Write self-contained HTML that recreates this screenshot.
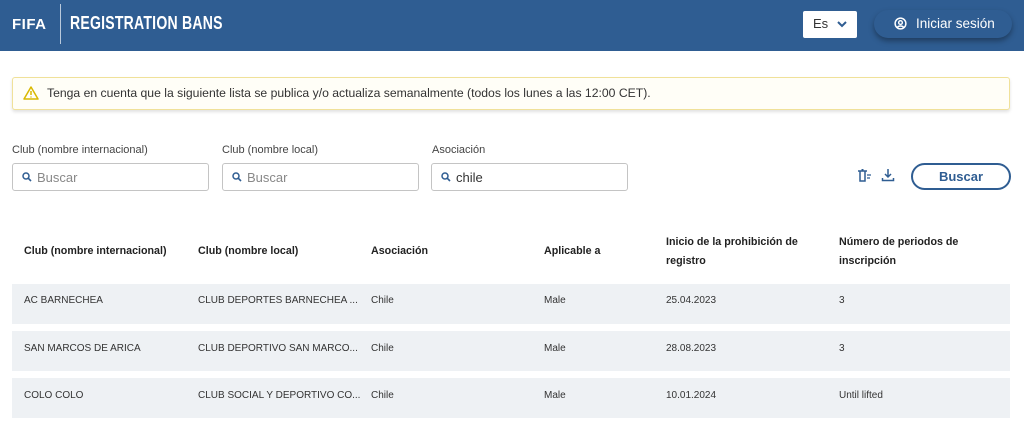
<!DOCTYPE html>
<html><head><meta charset="utf-8"><style>
*{box-sizing:border-box;margin:0;padding:0}
body{width:1024px;height:445px;background:#fff;font-family:"Liberation Sans",sans-serif;color:#333;position:relative;overflow:hidden}
.hdr{position:absolute;left:0;top:0;width:1024px;height:51px;background:#2f5d92}
.abs{position:absolute}
.fifa{left:12px;top:16px;color:#fff;font-weight:900;font-size:15px;letter-spacing:0.5px}
.sep{left:60px;top:4px;width:1px;height:40px;background:#b9c9dc}
.title{left:70px;top:13px;color:#fff;font-weight:bold;font-size:18px;transform:scaleX(0.78);transform-origin:left;letter-spacing:0.3px}
.lang{left:803px;top:11px;width:54px;height:27px;background:#fff;border-radius:2px;font-size:13px;color:#333;padding:5px 10px}
.login{left:874px;top:10px;width:138px;height:28px;border-radius:14px;background:#2f5d92;box-shadow:0 3px 6px rgba(0,0,0,.35);color:#fff;font-size:13.5px;padding:6px 0 0 42px}
.note{left:12px;top:77px;width:998px;height:33px;border:1px solid #f0e199;background:#fffef7;border-radius:3px;box-shadow:0 2px 3px rgba(0,0,0,.12);font-size:12.2px;color:#333;padding:8px 0 0 34px}
.lbl{font-size:11px;color:#444;top:144px}
.inp{top:163px;width:197px;height:28px;border:1px solid #c4c4c4;border-radius:3px;font-size:13px;color:#888;padding:6px 0 0 24px}
.inp svg{position:absolute;left:9px;top:8px}
.btn{left:911px;top:163px;width:100px;height:27px;border:2px solid #2f5d92;border-radius:14px;color:#2f5d92;font-weight:bold;font-size:13px;text-align:center;padding-top:4px}
.th{font-size:10.7px;font-weight:bold;color:#222;line-height:19px}
.row{left:12px;width:998px;height:40px;background:#eef1f4}
.td{font-size:10px;color:#333}
</style></head><body>
<div class="hdr"></div>
<div class="abs fifa">FIFA</div>
<div class="abs sep"></div>
<div class="abs title">REGISTRATION BANS</div>
<div class="abs lang">Es <svg style="position:absolute;left:34px;top:10px" width="10" height="7" viewBox="0 0 10 7"><path d="M1 1l4 4 4-4" stroke="#2f5d92" stroke-width="2" fill="none"/></svg></div>
<div class="abs login"><svg style="position:absolute;left:20px;top:7px" width="13" height="13" viewBox="0 0 14 14"><circle cx="7" cy="7" r="5.8" stroke="#fff" stroke-width="1.6" fill="none"/><circle cx="7" cy="6" r="2" stroke="#fff" stroke-width="1.5" fill="none"/><path d="M3.5 11.2c1.5-2 5.5-2 7 0" stroke="#fff" stroke-width="1.5" fill="none"/></svg>Iniciar sesión</div>
<div class="abs note"><svg style="position:absolute;left:10px;top:8px" width="16" height="14" viewBox="0 0 16 14"><path d="M8 1L15 13H1Z" stroke="#d9b800" stroke-width="1.5" fill="none" stroke-linejoin="round"/><path d="M8 5v4M8 10.5v1" stroke="#d9b800" stroke-width="1.5"/></svg>Tenga en cuenta que la siguiente lista se publica y/o actualiza semanalmente (todos los lunes a las 12:00 CET).</div>
<div class="abs lbl" style="left:12px">Club (nombre internacional)</div>
<div class="abs lbl" style="left:222px">Club (nombre local)</div>
<div class="abs lbl" style="left:432px">Asociación</div>
<div class="abs inp" style="left:12px"><svg width="10" height="10" viewBox="0 0 10 10"><circle cx="4" cy="4" r="3" stroke="#2f5d92" stroke-width="1.5" fill="none"/><path d="M6.2 6.2L9 9" stroke="#2f5d92" stroke-width="1.6"/></svg>Buscar</div>
<div class="abs inp" style="left:222px"><svg width="10" height="10" viewBox="0 0 10 10"><circle cx="4" cy="4" r="3" stroke="#2f5d92" stroke-width="1.5" fill="none"/><path d="M6.2 6.2L9 9" stroke="#2f5d92" stroke-width="1.6"/></svg>Buscar</div>
<div class="abs inp" style="left:431px;color:#333"><svg width="10" height="10" viewBox="0 0 10 10"><circle cx="4" cy="4" r="3" stroke="#2f5d92" stroke-width="1.5" fill="none"/><path d="M6.2 6.2L9 9" stroke="#2f5d92" stroke-width="1.6"/></svg>chile</div>
<svg class="abs" style="left:857px;top:169px" width="16" height="14" viewBox="0 0 16 14"><path d="M1 2h9M3 2v10h5V2M4.5 0.8h2" stroke="#2f5d92" stroke-width="1.5" fill="none"/><path d="M10 6h4M10 9h3" stroke="#2f5d92" stroke-width="1.3"/></svg>
<svg class="abs" style="left:881px;top:168px" width="14" height="14" viewBox="0 0 14 14"><path d="M7 1v8M4 6l3 3 3-3M1.5 10v2.5h11V10" stroke="#2f5d92" stroke-width="1.5" fill="none"/></svg>
<div class="abs btn">Buscar</div>
<div class="abs th" style="left:24px;top:242px">Club (nombre internacional)</div>
<div class="abs th" style="left:198px;top:242px">Club (nombre local)</div>
<div class="abs th" style="left:371px;top:242px">Asociación</div>
<div class="abs th" style="left:544px;top:242px">Aplicable a</div>
<div class="abs th" style="left:666px;top:233px">Inicio de la prohibición de<br>registro</div>
<div class="abs th" style="left:839px;top:233px">Número de periodos de<br>inscripción</div>
<div class="abs row" style="top:284px"></div>
<div class="abs row" style="top:331px"></div>
<div class="abs row" style="top:378px"></div>
<div class="abs td" style="left:24px;top:295px">AC BARNECHEA</div><div class="abs td" style="left:198px;top:295px">CLUB DEPORTES BARNECHEA ...</div><div class="abs td" style="left:371px;top:295px">Chile</div><div class="abs td" style="left:544px;top:295px">Male</div><div class="abs td" style="left:666px;top:295px">25.04.2023</div><div class="abs td" style="left:839px;top:295px">3</div>
<div class="abs td" style="left:24px;top:343px">SAN MARCOS DE ARICA</div><div class="abs td" style="left:198px;top:343px">CLUB DEPORTIVO SAN MARCO...</div><div class="abs td" style="left:371px;top:343px">Chile</div><div class="abs td" style="left:544px;top:343px">Male</div><div class="abs td" style="left:666px;top:343px">28.08.2023</div><div class="abs td" style="left:839px;top:343px">3</div>
<div class="abs td" style="left:24px;top:390px">COLO COLO</div><div class="abs td" style="left:198px;top:390px">CLUB SOCIAL Y DEPORTIVO CO...</div><div class="abs td" style="left:371px;top:390px">Chile</div><div class="abs td" style="left:544px;top:390px">Male</div><div class="abs td" style="left:666px;top:390px">10.01.2024</div><div class="abs td" style="left:839px;top:390px">Until lifted</div>
</body></html>
